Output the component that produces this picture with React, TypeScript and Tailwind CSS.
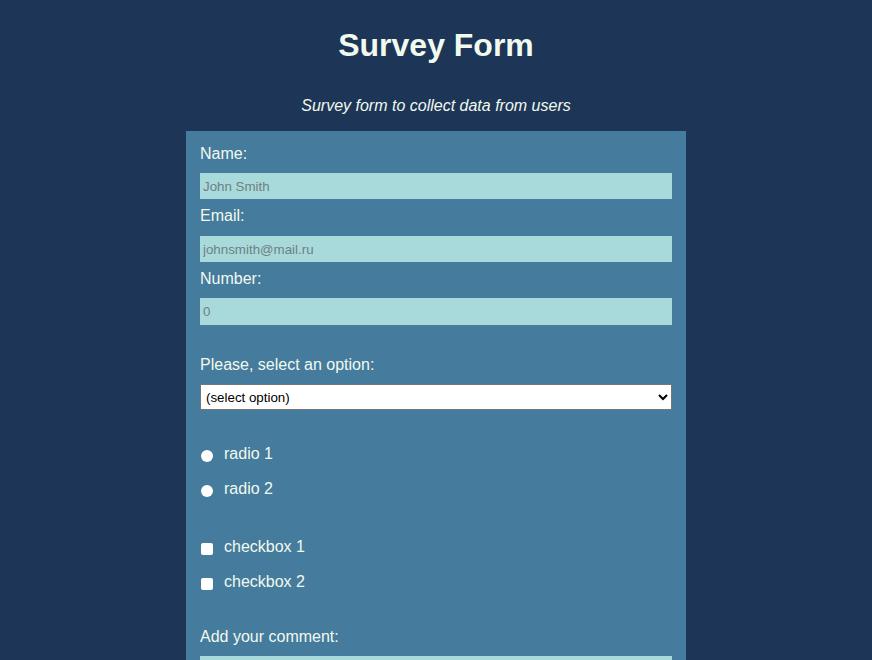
export default function App() {
  return (
    <div className="min-h-[660px] bg-[#1d3557] font-['Liberation_Sans',Arial,sans-serif] text-[#f1faee]">
      <h1 className="pt-[27px] text-center text-[32px] font-bold leading-[37px]">Survey Form</h1>
      <p className="mt-[33px] text-center text-base italic leading-[18px]">
        Survey form to collect data from users
      </p>

      <form className="mx-auto mt-[16px] w-[500px] bg-[#457b9d] px-[14px] pt-[14px] pb-6">
        <label htmlFor="name" className="block leading-[18px]">Name:</label>
        <input
          id="name"
          type="text"
          placeholder="John Smith"
          className="mt-[10px] block h-[26px] w-full bg-[#a8dadc] px-[3px] text-[13.33px] text-black placeholder:text-[#6f7f80]"
        />
        <label htmlFor="email" className="mt-[8px] block leading-[18px]">Email:</label>
        <input
          id="email"
          type="email"
          placeholder="johnsmith@mail.ru"
          className="mt-[11px] block h-[26px] w-full bg-[#a8dadc] px-[3px] text-[13.33px] text-black placeholder:text-[#6f7f80]"
        />
        <label htmlFor="number" className="mt-[8px] block leading-[18px]">Number:</label>
        <input
          id="number"
          type="number"
          placeholder="0"
          className="mt-[10px] block h-[27px] w-full bg-[#a8dadc] px-[3px] text-[13.33px] text-black placeholder:text-[#6f7f80]"
        />

        <label htmlFor="dropdown" className="mt-[31px] block leading-[18px]">Please, select an option:</label>
        <select
          id="dropdown"
          className="mt-[10px] block h-[26px] w-full border border-[#767676] bg-white px-[1px] text-[13.33px] text-black"
          defaultValue=""
        >
          <option value="">(select option)</option>
          <option value="1">option 1</option>
          <option value="2">option 2</option>
        </select>

        <div className="mt-[35px] flex flex-col gap-[17px]">
          {["radio 1", "radio 2"].map((r) => (
            <label key={r} className="flex items-center leading-[18px]">
              <input
                type="radio"
                name="radio"
                className="mt-[3px] mr-[11px] ml-[1px] h-[12px] w-[12px] appearance-none rounded-full bg-white"
              />
              {r}
            </label>
          ))}
        </div>

        <div className="mt-[40px] flex flex-col gap-[17px]">
          {["checkbox 1", "checkbox 2"].map((c) => (
            <label key={c} className="flex items-center leading-[18px]">
              <input
                type="checkbox"
                className="mt-[3px] mr-[11px] ml-[1px] h-[12px] w-[12px] appearance-none rounded-[2px] bg-white"
              />
              {c}
            </label>
          ))}
        </div>

        <label htmlFor="comment" className="mt-[37px] block leading-[18px]">Add your comment:</label>
        <textarea
          id="comment"
          rows={4}
          className="mt-[10px] block w-full bg-[#a8dadc] px-[3px] text-[13.33px] text-black"
        />
      </form>
    </div>
  );
}
